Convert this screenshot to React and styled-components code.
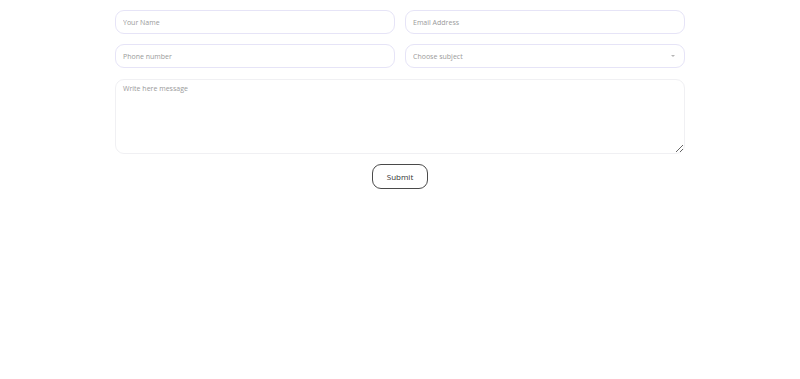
import styled, { createGlobalStyle } from 'styled-components'

const GlobalStyle = createGlobalStyle`
  body {
    margin: 0;
    background: #ffffff;
    font-family: "Open Sans", "Liberation Sans", sans-serif;
  }
  * { box-sizing: border-box; }
`;

// Formulário de contato
const Form = styled.form`
  width: 570px;
  margin: 10px auto 0;
  display: flex;
  flex-direction: column;
  gap: 10px;
`;

const Row = styled.div`
  display: grid;
  grid-template-columns: 1fr 1fr;
  gap: 10px;
`;

const Field = styled.input`
  display: block;
  height: 24px;
  width: 100%;
  padding: 0 7px;
  border: 1px solid #e6e4f7;
  border-radius: 9px;
  font-family: inherit;
  font-size: 7px;
  color: #333;
  background: #fff;
  outline: none;

  &::placeholder { color: #9a9a9a; }
`;

const SelectWrap = styled.div`
  position: relative;
`;

const Select = styled.select`
  display: block;
  height: 24px;
  width: 100%;
  padding: 0 7px;
  border: 1px solid #e6e4f7;
  border-radius: 9px;
  font-family: inherit;
  font-size: 7px;
  color: #9a9a9a;
  background: #fff;
  appearance: none;
  outline: none;
`;

const Arrow = styled.span`
  position: absolute;
  right: 10px;
  top: 11px;
  width: 0;
  height: 0;
  border-left: 2px solid transparent;
  border-right: 2px solid transparent;
  border-top: 2px solid #b5b5b5;
  pointer-events: none;
`;

const Message = styled.textarea`
  display: block;
  height: 75px;
  width: 100%;
  padding: 4px 7px;
  margin-top: 1px;
  border: 1px solid #f0f0f3;
  border-radius: 9px;
  font-family: inherit;
  font-size: 7px;
  color: #333;
  resize: vertical;
  outline: none;

  &::placeholder { color: #9a9a9a; }
`;

const Actions = styled.div`
  display: flex;
  justify-content: center;
`;

const Submit = styled.button`
  width: 56px;
  height: 25px;
  border: 1px solid #4a4a4a;
  border-radius: 9px;
  background: #fff;
  font-family: inherit;
  font-size: 8px;
  color: #333;
  cursor: pointer;
`;

export default function App() {
  return (
    <>
      <GlobalStyle />
      <Form onSubmit={e => e.preventDefault()}>
        <Row>
          <Field placeholder="Your Name" />
          <Field placeholder="Email Address" />
        </Row>
        <Row>
          <Field placeholder="Phone number" />
          <SelectWrap>
            <Select defaultValue="">
              <option value="" disabled>Choose subject</option>
            </Select>
            <Arrow />
          </SelectWrap>
        </Row>
        <Message placeholder="Write here message" />
        <Actions>
          <Submit type="submit">Submit</Submit>
        </Actions>
      </Form>
    </>
  );
}
